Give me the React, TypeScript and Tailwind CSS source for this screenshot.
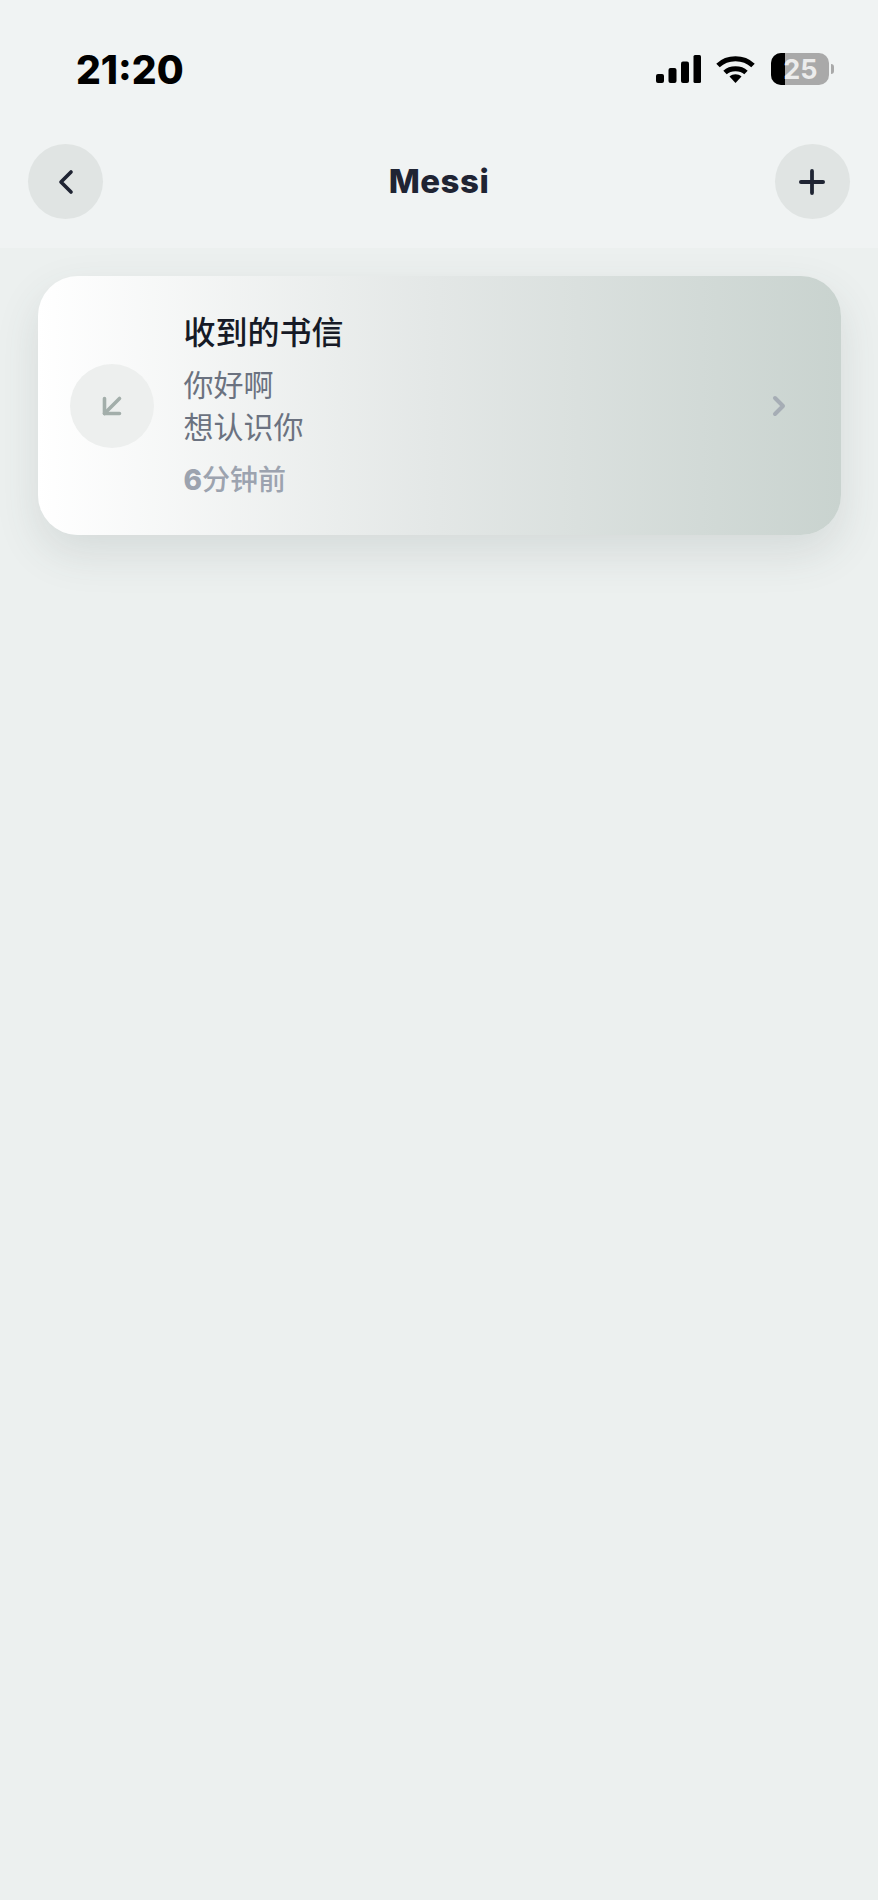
import { ArrowDownLeft, ChevronLeft, ChevronRight, Plus } from "lucide-react";

const fontStack = "font-['Inter','Noto_Sans_CJK_SC',sans-serif]";

function StatusIcons() {
  return (
    <div className="flex items-center">
      <svg width="45" height="28" viewBox="0 0 45 28" className="mr-[15px]">
        <rect x="0" y="19" width="8" height="9" rx="2" fill="#000" />
        <rect x="12.5" y="13" width="8" height="15" rx="2" fill="#000" />
        <rect x="25" y="6.5" width="8" height="21.5" rx="2" fill="#000" />
        <rect x="37.5" y="0" width="7.5" height="28" rx="1.5" fill="#000" />
      </svg>
      <svg width="39" height="28" viewBox="0 0 39 28" className="mr-[16px]" fill="none">
        <path d="M2 10.5C11.5 1.5 27.5 1.5 37 10.5" stroke="#000" strokeWidth="5" />
        <path d="M9 17.5C14.5 12.5 24.5 12.5 30 17.5" stroke="#000" strokeWidth="5" />
        <path d="M13.5 21.5C17 18.5 22 18.5 25.5 21.5L19.5 28Z" fill="#000" />
      </svg>
      <div className="flex items-center">
        <div className="relative h-[32px] w-[58px] overflow-hidden rounded-[10px] bg-[#a9a9a9]">
          <div className="h-full w-[14px] bg-black" />
          <span className="absolute inset-0 flex items-center justify-center pl-[1px] text-[27px] font-bold leading-none text-[#ececec]">
            25
          </span>
        </div>
        <div className="ml-[2px] h-[10px] w-[3px] rounded-r-full bg-[#a9a9a9]" />
      </div>
    </div>
  );
}

function RoundButton({ children }: { children: React.ReactNode }) {
  return (
    <button className="flex h-[75px] w-[75px] items-center justify-center rounded-full bg-[#e0e4e3] text-[#1f2433]">
      {children}
    </button>
  );
}

function LetterCard() {
  return (
    <div className="mx-[37.5px] mt-[28px] flex h-[259px] items-center rounded-[40px] bg-gradient-to-r from-white via-[#e3e7e6] via-50% to-[#c9d3cf] pl-[32px] pr-[46px] shadow-[0_18px_44px_rgba(60,80,75,0.13)]">
      <div className="flex h-[84px] w-[84px] shrink-0 items-center justify-center rounded-full bg-[#edefee] text-[#a3aeaa]">
        <ArrowDownLeft size={36} strokeWidth={2.4} />
      </div>
      <div className="ml-[30px] flex-1">
        <div className="text-[32px] font-medium leading-[44px] text-[#161a26]">收到的书信</div>
        <div className="mt-[9px] text-[30px] leading-[42px] text-[#6b7280]">
          <div>你好啊</div>
          <div>想认识你</div>
        </div>
        <div className="mt-[12px] text-[28px] font-medium leading-[40px] text-[#9ca3af]">
          <span className="font-extrabold">6</span>分钟前
        </div>
      </div>
      <ChevronRight size={32} strokeWidth={3} className="text-[#a6adb5]" />
    </div>
  );
}

export default function App() {
  return (
    <div className={`${fontStack} h-[1900px] w-[878px] overflow-hidden bg-[#ecf0ef]`}>
      <header className="h-[248px] bg-[#f0f3f3]">
        <div className="flex h-[144px] items-start justify-between pl-[76px] pr-[44px] pt-[46px]">
          <span className="text-[39px] font-extrabold leading-[47px] text-black">21:20</span>
          <div className="pt-[7px]">
            <StatusIcons />
          </div>
        </div>
        <div className="-mt-[0px] flex items-center justify-between px-[28px]">
          <RoundButton>
            <ChevronLeft size={40} strokeWidth={2.2} />
          </RoundButton>
          <h1 className="text-[33px] font-extrabold tracking-[0.5px] text-[#1f2433]">Messi</h1>
          <RoundButton>
            <Plus size={38} strokeWidth={2.4} />
          </RoundButton>
        </div>
      </header>
      <LetterCard />
    </div>
  );
}
